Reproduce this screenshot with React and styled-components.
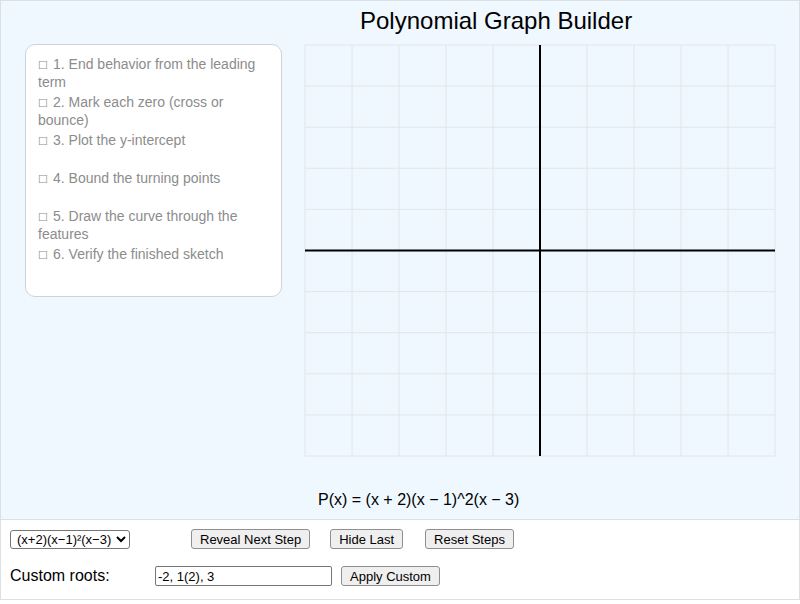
import React from 'react'
import styled, { createGlobalStyle } from 'styled-components';

const GlobalStyle = createGlobalStyle`
body{
    margin: 0;
    font-family: "Liberation Sans", Arial, sans-serif;
    background: #fff;
}
`;

const Page = styled.div`
width: 800px;
`;

const Stage = styled.div`
height: 518px;
background: #eff7ff;
border: 1px solid #dcdfe3;
display: flex;
flex-direction: column;
`;

const Title = styled.h1`
margin: 0;
height: 43px;
padding-left: 359px;
font-size: 24px;
font-weight: normal;
line-height: 40px;
color: #000;
`;

const Content = styled.div`
display: flex;
align-items: flex-start;
padding-left: 24px;
`;

const Checklist = styled.ul`
list-style: none;
margin: 0;
padding: 10px 10px 14px 12px;
width: 233px;
height: 227px;
background: #fff;
border: 1px solid #cfd3d8;
border-radius: 10px;
color: #8c8c8c;
font-size: 14px;
line-height: 18px;
`;

const Step = styled.li`
min-height: 36px;
margin-bottom: 2px;
`;

const Box = styled.span`
font-size: 11px;
line-height: 1;
margin-right: 5px;
`;

const GraphWrap = styled.div`
margin-left: 22px;
`;

const Formula = styled.div`
padding: 33px 0 0 317px;
font-size: 16px;
line-height: 20px;
color: #000;
`;

const Controls = styled.div`
height: 79px;
border: 1px solid #dcdfe3;
border-top: none;
background: #fff;
padding: 0 9px;
display: flex;
flex-direction: column;
`;

const Row = styled.div`
display: flex;
align-items: center;
height: ${p => p.$h}px;
`;

const Select = styled.select`
font-family: "Liberation Sans", Arial, sans-serif;
font-size: 13px;
height: 19px;
width: 120px;
padding: 0 2px;
border: 1px solid #767676;
border-radius: 3px;
background: #fff;
color: #000;
`;

const Button = styled.button`
font-family: "Liberation Sans", Arial, sans-serif;
font-size: 13px;
height: 20px;
padding: 0 8px;
margin-left: ${p => p.$ml || 0}px;
background: #efefef;
border: 1px solid #8f8f8f;
border-radius: 3px;
color: #000;
cursor: pointer;
`;

const Label = styled.span`
font-size: 16px;
width: 145px;
color: #000;
`;

const TextInput = styled.input`
font-family: "Liberation Sans", Arial, sans-serif;
font-size: 13px;
width: 171px;
height: 16px;
padding: 1px 2px;
border: 1px solid #767676;
border-radius: 2px;
color: #000;
`;

const steps = [
    "1. End behavior from the leading term",
    "2. Mark each zero (cross or bounce)",
    "3. Plot the y-intercept",
    "4. Bound the turning points",
    "5. Draw the curve through the features",
    "6. Verify the finished sketch",
];

const Graph = () => {
    const w = 470;
    const h = 411;
    const cols = 10;
    const rows = 10;
    const cw = w / cols;
    const rh = h / rows;
    return (
        <svg width={w + 2} height={h + 2} style={{ display: 'block' }}>
            {Array.from({ length: cols + 1 }).map((_, i) => (
                <line key={'v' + i} x1={1 + i * cw} y1={1} x2={1 + i * cw} y2={h + 1} stroke="#e3e6ea" strokeWidth="1" />
            ))}
            {Array.from({ length: rows + 1 }).map((_, i) => (
                <line key={'h' + i} x1={1} y1={1 + i * rh} x2={w + 1} y2={1 + i * rh} stroke="#e3e6ea" strokeWidth="1" />
            ))}
            <line x1={1 + 5 * cw} y1={1} x2={1 + 5 * cw} y2={h + 1} stroke="#000" strokeWidth="2" />
            <line x1={1} y1={1 + 5 * rh} x2={w + 1} y2={1 + 5 * rh} stroke="#000" strokeWidth="2" />
        </svg>
    );
}

const App = () => {
    return (
        <Page>
            <GlobalStyle />
            <Stage>
                <Title>Polynomial Graph Builder</Title>
                <Content>
                    <Checklist>
                        {steps.map(s => (
                            <Step key={s}><Box>☐</Box>{s}</Step>
                        ))}
                    </Checklist>
                    <GraphWrap>
                        <Graph />
                    </GraphWrap>
                </Content>
                <Formula>P(x) = (x + 2)(x − 1)^2(x − 3)</Formula>
            </Stage>
            <Controls>
                <Row $h={38}>
                    <Select defaultValue="a">
                        <option value="a">(x+2)(x−1)²(x−3)</option>
                    </Select>
                    <Button $ml={61}>Reveal Next Step</Button>
                    <Button $ml={20}>Hide Last</Button>
                    <Button $ml={22}>Reset Steps</Button>
                </Row>
                <Row $h={36}>
                    <Label>Custom roots:</Label>
                    <TextInput defaultValue="-2, 1(2), 3" />
                    <Button $ml={9}>Apply Custom</Button>
                </Row>
            </Controls>
        </Page>
    );
}

export default App
